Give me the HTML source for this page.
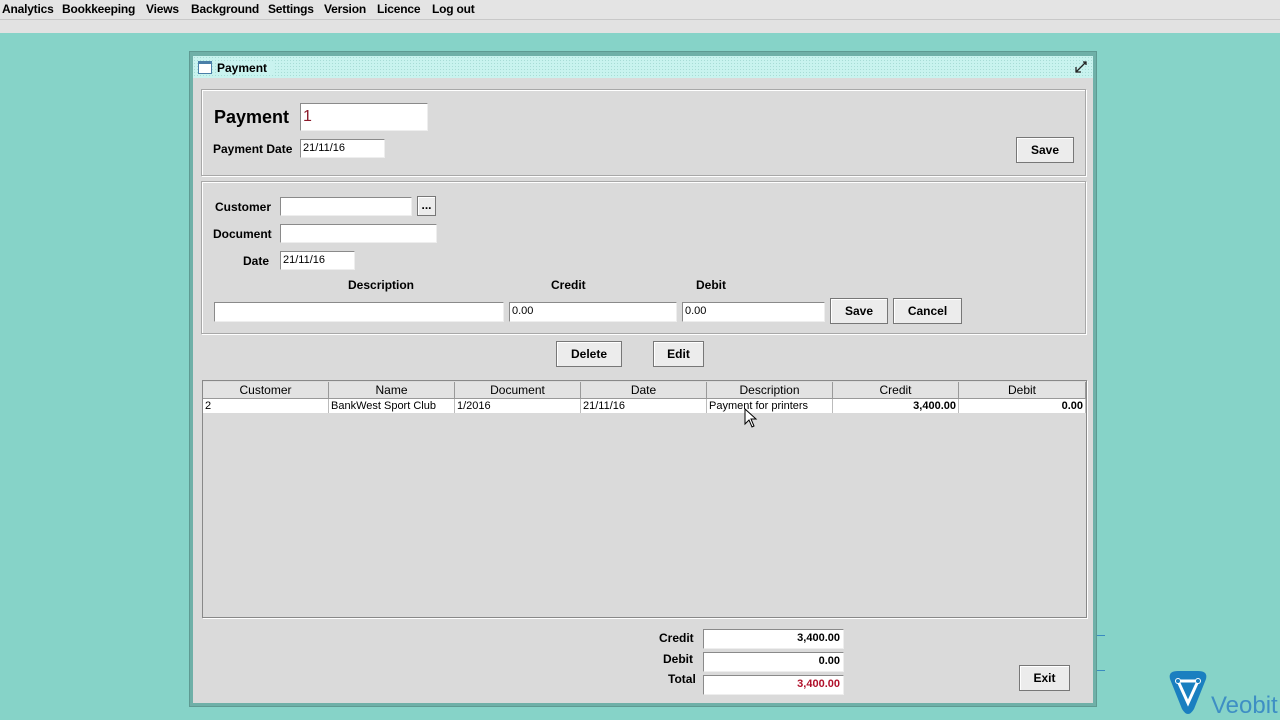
<!DOCTYPE html>
<html><head><style>
*{margin:0;padding:0;box-sizing:border-box}
body{width:1280px;height:720px;overflow:hidden;background:#86d3c8;font-family:"Liberation Sans",Arial,sans-serif;font-size:12px;position:relative;color:#000}
.a{position:absolute}
.menu{left:0;top:0;width:1280px;height:20px;background:#e4e4e4;border-bottom:1px solid #c8c8c8}
.menu span{position:absolute;top:2px;font-weight:bold;font-size:12px;letter-spacing:-0.2px}
.band{left:0;top:20px;width:1280px;height:13px;background:#e2e2e2}
.win{left:189px;top:51px;width:908px;height:656px;background:#6fb0a8;border:1px solid #5e9a92}
.inner{left:193px;top:56px;width:900px;height:647px;background:#dadada}
.title{left:193px;top:56px;width:900px;height:22px;background:#c9f3ef;background-image:radial-gradient(#a8dcd6 0.6px,transparent 0.8px);background-size:3px 3px}
.panel{border:1px solid #a8a8a8;box-shadow:inset 1px 1px 0 #fff,1px 1px 0 #fff}
.tf{background:#fff;border:1px solid #8a8a8a;border-right-color:#eee;border-bottom-color:#eee;font-size:11px;padding-left:2px;line-height:17px}
.btn{background:#ececec;border:1px solid #777;box-shadow:inset 1px 1px 0 #fff;font-weight:bold;text-align:center;font-size:12px}
.lb{font-weight:bold;font-size:12px}
.th{background:#e2e2e2;border-right:1px solid #999;border-bottom:1px solid #999;text-align:center;font-size:12px;line-height:17px;top:382px;height:17px}
.td{background:#fff;border-right:1px solid #bbb;font-size:11px;line-height:14px;top:399px;height:14px;padding:0 2px}
</style></head><body>
<div class="a menu">
<span style="left:2px">Analytics</span><span style="left:62px">Bookkeeping</span><span style="left:146px">Views</span><span style="left:191px">Background</span><span style="left:268px">Settings</span><span style="left:324px">Version</span><span style="left:377px">Licence</span><span style="left:432px">Log out</span>
</div>
<div class="a band"></div>
<div class="a win"></div>
<div class="a inner"></div>
<div class="a title"></div>
<div class="a" style="left:198px;top:61px;width:14px;height:13px;border:1px solid #4a7fa8;background:#fff;border-top-width:3px"></div>
<div class="a lb" style="left:217px;top:61px;background:#c9f3ef;padding-right:6px">Payment</div>
<svg class="a" style="left:1073px;top:59px" width="16" height="16"><path d="M3 13 L13 3 M3 8 V13 H8 M10 3 H13 V6" stroke="#222" stroke-width="1.3" fill="none"/></svg>

<div class="a panel" style="left:201px;top:89px;width:885px;height:87px"></div>
<div class="a" style="left:214px;top:107px;font-size:18px;font-weight:bold">Payment</div>
<div class="a tf" style="left:300px;top:103px;width:128px;height:28px;font-size:16px;line-height:26px;color:#8b1a2a">1</div>
<div class="a lb" style="left:213px;top:142px">Payment Date</div>
<div class="a tf" style="left:300px;top:139px;width:85px;height:19px">21/11/16</div>
<div class="a btn" style="left:1016px;top:137px;width:58px;height:26px;line-height:24px">Save</div>

<div class="a panel" style="left:201px;top:181px;width:885px;height:153px"></div>
<div class="a lb" style="left:215px;top:200px">Customer</div>
<div class="a tf" style="left:280px;top:197px;width:132px;height:19px"></div>
<div class="a btn" style="left:417px;top:196px;width:19px;height:20px;line-height:16px">...</div>
<div class="a lb" style="left:213px;top:227px">Document</div>
<div class="a tf" style="left:280px;top:224px;width:157px;height:19px"></div>
<div class="a lb" style="left:243px;top:254px">Date</div>
<div class="a tf" style="left:280px;top:251px;width:75px;height:19px">21/11/16</div>
<div class="a lb" style="left:348px;top:278px">Description</div>
<div class="a lb" style="left:551px;top:278px">Credit</div>
<div class="a lb" style="left:696px;top:278px">Debit</div>
<div class="a tf" style="left:214px;top:302px;width:290px;height:20px"></div>
<div class="a tf" style="left:509px;top:302px;width:168px;height:20px">0.00</div>
<div class="a tf" style="left:682px;top:302px;width:143px;height:20px">0.00</div>
<div class="a btn" style="left:830px;top:298px;width:58px;height:26px;line-height:24px">Save</div>
<div class="a btn" style="left:893px;top:298px;width:69px;height:26px;line-height:24px">Cancel</div>

<div class="a btn" style="left:556px;top:341px;width:66px;height:26px;line-height:24px">Delete</div>
<div class="a btn" style="left:653px;top:341px;width:51px;height:26px;line-height:24px">Edit</div>

<div class="a" style="left:202px;top:380px;width:885px;height:238px;border:1px solid #888;background:#dadada;box-shadow:1px 1px 0 #fff"></div>
<div class="a th" style="left:203px;width:126px">Customer</div>
<div class="a th" style="left:329px;width:126px">Name</div>
<div class="a th" style="left:455px;width:126px">Document</div>
<div class="a th" style="left:581px;width:126px">Date</div>
<div class="a th" style="left:707px;width:126px">Description</div>
<div class="a th" style="left:833px;width:126px">Credit</div>
<div class="a th" style="left:959px;width:127px">Debit</div>
<div class="a td" style="left:203px;width:126px">2</div>
<div class="a td" style="left:329px;width:126px">BankWest Sport Club</div>
<div class="a td" style="left:455px;width:126px">1/2016</div>
<div class="a td" style="left:581px;width:126px">21/11/16</div>
<div class="a td" style="left:707px;width:126px">Payment for printers</div>
<div class="a td" style="left:833px;width:126px;text-align:right;font-weight:bold">3,400.00</div>
<div class="a td" style="left:959px;width:127px;text-align:right;font-weight:bold">0.00</div>
<svg class="a" style="left:744px;top:408px" width="14" height="20"><path d="M1 1 V16 L5 12 L8 19 L10 18 L7 11 H12 Z" fill="#fff" stroke="#000"/></svg>

<div class="a lb" style="left:659px;top:631px">Credit</div>
<div class="a lb" style="left:663px;top:652px">Debit</div>
<div class="a lb" style="left:668px;top:672px">Total</div>
<div class="a tf" style="left:703px;top:629px;width:141px;height:20px;text-align:right;padding-right:3px;font-weight:bold">3,400.00</div>
<div class="a tf" style="left:703px;top:652px;width:141px;height:20px;text-align:right;padding-right:3px;font-weight:bold">0.00</div>
<div class="a tf" style="left:703px;top:675px;width:141px;height:20px;text-align:right;padding-right:3px;font-weight:bold;color:#b0102a">3,400.00</div>
<div class="a btn" style="left:1019px;top:665px;width:51px;height:26px;line-height:24px">Exit</div>

<div class="a" style="left:1097px;top:635px;width:8px;height:1px;background:#3a8bc0"></div>
<div class="a" style="left:1097px;top:670px;width:8px;height:1px;background:#3a8bc0"></div>
<svg class="a" style="left:1166px;top:669px" width="44" height="48"><path d="M4 10 Q2 2 12 2 L32 2 Q42 2 40 10 L28 40 Q22 50 16 40 Z" fill="#1a7fc0"/><path d="M12 12 L22 34 L32 12 Z" fill="none" stroke="#fff" stroke-width="3"/><circle cx="12" cy="12" r="2.5" fill="#1a7fc0" stroke="#fff"/><circle cx="32" cy="12" r="2.5" fill="#1a7fc0" stroke="#fff"/></svg>
<div class="a" style="left:1211px;top:692px;font-size:24px;color:#3e8fc4;font-weight:300">Veobit</div>
</body></html>
